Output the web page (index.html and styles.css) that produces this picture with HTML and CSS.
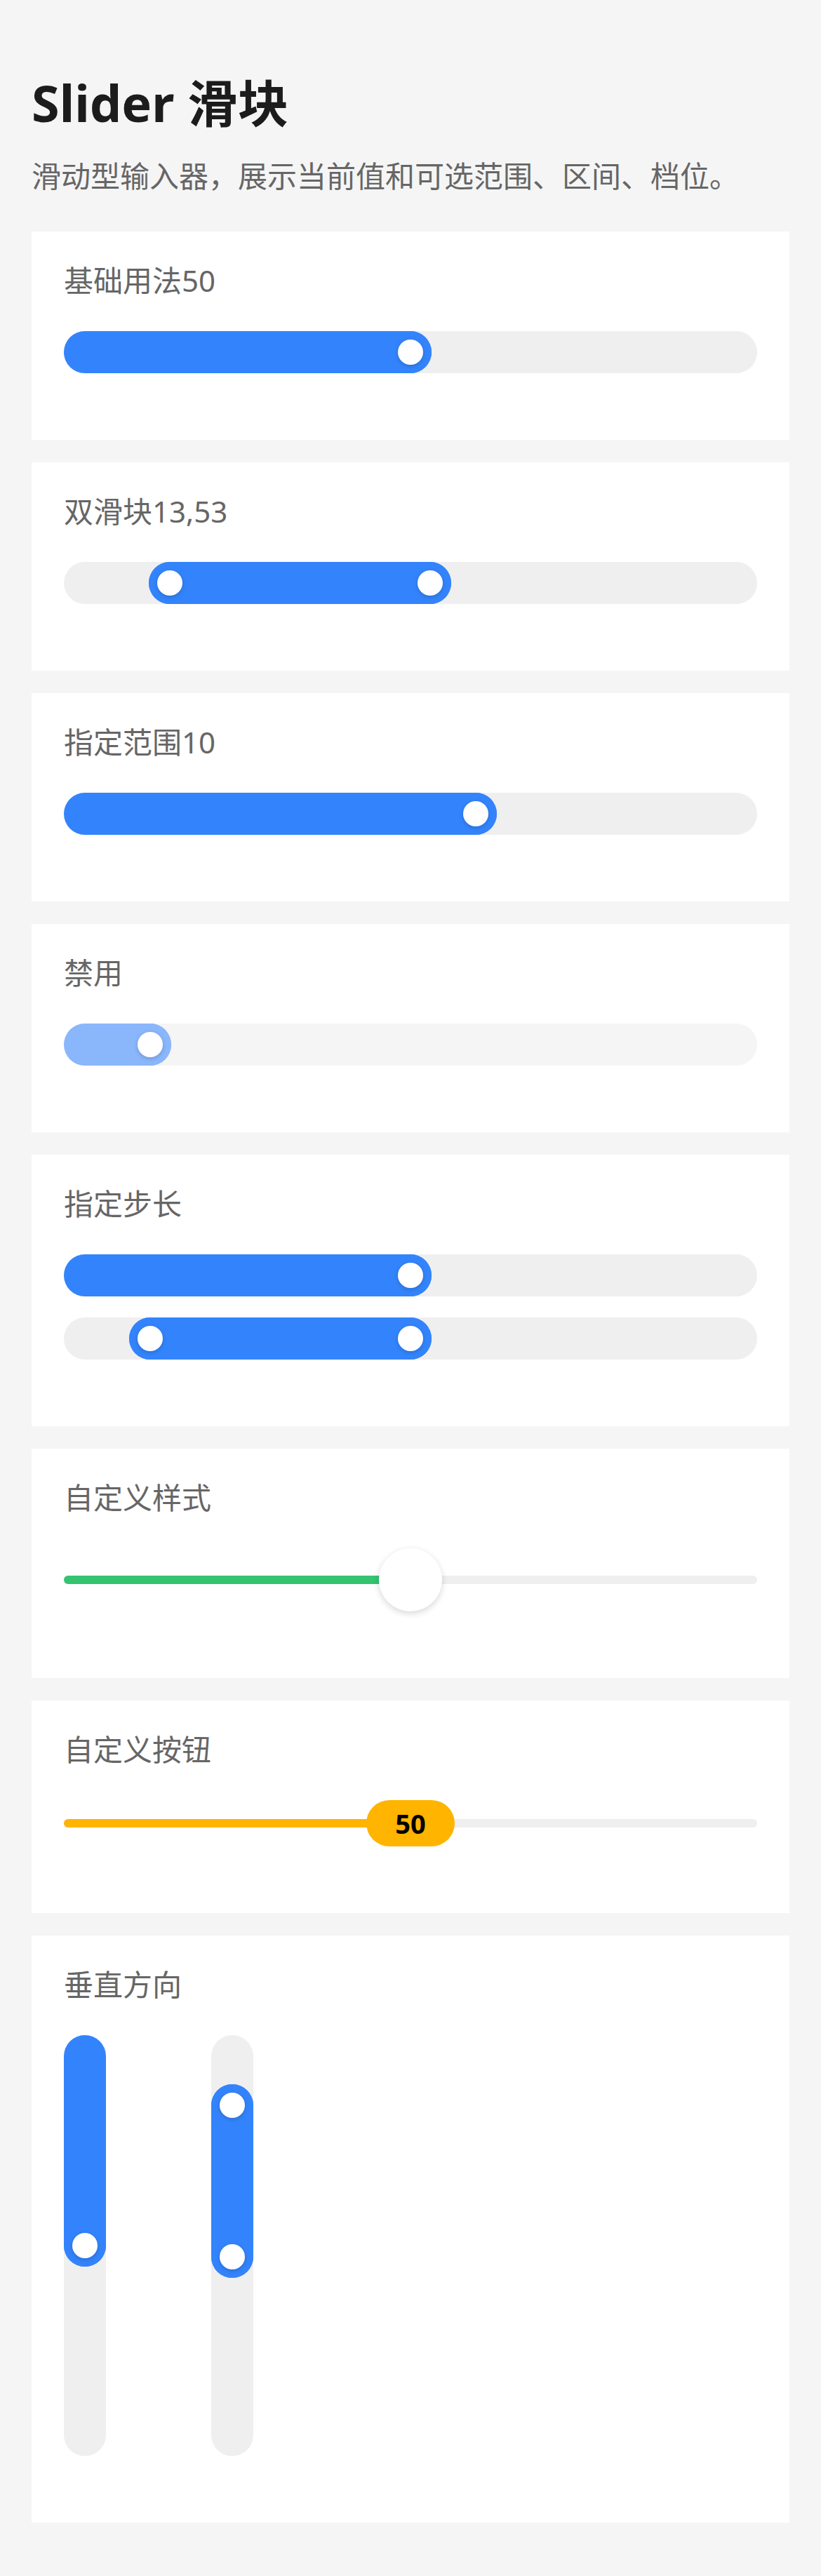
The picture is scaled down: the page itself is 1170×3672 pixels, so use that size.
FILE: index.html
```html
<!DOCTYPE html>
<html lang="zh-CN">
  <head>
    <meta charset="UTF-8" />
    <title>Slider 滑块</title>
    <link rel="stylesheet" href="styles.css">
  </head>
  <body>
    <div class="page">
      <h1 class="title">Slider 滑块</h1>
      <p class="desc">滑动型输入器，展示当前值和可选范围、区间、档位。</p>

      <div class="card">
        <div class="card-title">基础用法50</div>
        <div class="card-body">
          <div class="slider">
            <div class="slider-rail">
              <div class="slider-bar" style="left:0%;width:50%"></div>
              <div class="slider-btn" style="left:50%"></div>
            </div>
          </div>
        </div>
      </div>

      <div class="card">
        <div class="card-title">双滑块13,53</div>
        <div class="card-body">
          <div class="slider">
            <div class="slider-rail">
              <div class="slider-bar" style="left:13%;width:40%"></div>
              <div class="slider-btn" style="left:13%"></div>
              <div class="slider-btn" style="left:53%"></div>
            </div>
          </div>
        </div>
      </div>

      <div class="card">
        <div class="card-title">指定范围10</div>
        <div class="card-body">
          <div class="slider">
            <div class="slider-rail">
              <div class="slider-bar" style="left:0%;width:60%"></div>
              <div class="slider-btn" style="left:60%"></div>
            </div>
          </div>
        </div>
      </div>

      <div class="card">
        <div class="card-title">禁用</div>
        <div class="card-body">
          <div class="slider slider--disabled">
            <div class="slider-rail">
              <div class="slider-bar" style="left:0%;width:10%"></div>
              <div class="slider-btn" style="left:10%"></div>
            </div>
          </div>
        </div>
      </div>

      <div class="card">
        <div class="card-title">指定步长</div>
        <div class="card-body">
          <div class="slider">
            <div class="slider-rail">
              <div class="slider-bar" style="left:0%;width:50%"></div>
              <div class="slider-btn" style="left:50%"></div>
            </div>
          </div>
          <div class="slider">
            <div class="slider-rail">
              <div class="slider-bar" style="left:10%;width:40%"></div>
              <div class="slider-btn" style="left:10%"></div>
              <div class="slider-btn" style="left:50%"></div>
            </div>
          </div>
        </div>
      </div>

      <div class="card">
        <div class="card-title">自定义样式</div>
        <div class="card-body">
          <div class="slider slider--line">
            <div class="slider-rail">
              <div class="slider-bar" style="left:0%;width:50%"></div>
              <div class="slider-btn" style="left:50%"></div>
            </div>
          </div>
        </div>
      </div>

      <div class="card">
        <div class="card-title">自定义按钮</div>
        <div class="card-body">
          <div class="slider slider--pill">
            <div class="slider-rail">
              <div class="slider-bar" style="left:0%;width:50%"></div>
              <div class="slider-btn" style="left:50%">50</div>
            </div>
          </div>
        </div>
      </div>

      <div class="card">
        <div class="card-title">垂直方向</div>
        <div class="card-body card-body--row">
          <div class="slider slider--vertical">
            <div class="slider-rail">
              <div class="slider-bar" style="top:0%;height:50%"></div>
              <div class="slider-btn" style="top:50%"></div>
            </div>
          </div>
          <div class="slider slider--vertical">
            <div class="slider-rail">
              <div class="slider-bar" style="top:13%;height:40%"></div>
              <div class="slider-btn" style="top:13%"></div>
              <div class="slider-btn" style="top:53%"></div>
            </div>
          </div>
        </div>
      </div>
    </div>
  </body>
</html>
```

FILE: styles.css
```css
body {
  margin: 0;
  background-color: #f5f5f5;
  font-family: "Noto Sans", "Noto Sans CJK SC", sans-serif;
}

.page {
  padding: 96px 45px 78px;
}

.title {
  margin: 0;
  font-size: 72px;
  line-height: 100px;
  font-weight: bold;
  color: #1c1c1c;
}

.desc {
  margin: 25px 0 49px;
  font-size: 42px;
  line-height: 60px;
  color: #666;
}

.card {
  padding: 45px 46px;
  margin-bottom: 32px;
  background-color: #fff;
}

.card-title {
  font-size: 42px;
  line-height: 49px;
  color: #666;
}

.card-body {
  display: flex;
  flex-direction: column;
  gap: 30px;
  margin: 48px 0 50px;
}

.card-body--row {
  flex-direction: row;
  gap: 150px;
}

/* slider */

.slider {
  position: relative;
  height: 60px;
  border-radius: 30px;
  background-color: #efefef;
}

.slider-rail {
  position: absolute;
  top: 0;
  bottom: 0;
  left: 30px;
  right: 30px;
}

.slider-bar {
  position: absolute;
  top: 0;
  height: 100%;
  margin-left: -30px;
  padding-right: 60px;
  border-radius: 30px;
  background-color: #3384fc;
}

.slider-btn {
  position: absolute;
  top: 0;
  width: 60px;
  height: 60px;
  margin-left: -30px;
  border-radius: 50%;
  background-color: #3384fc;
  display: flex;
  align-items: center;
  justify-content: center;
}

.slider-btn::after {
  content: "";
  width: 36px;
  height: 36px;
  border-radius: 50%;
  background-color: #fff;
  box-shadow: 0 2px 6px rgba(0, 0, 0, 0.18);
}

.slider--disabled {
  background-color: #f5f5f5;
}

.slider--disabled .slider-bar,
.slider--disabled .slider-btn {
  background-color: #8ab6fc;
}

/* custom line style */

.slider--line,
.slider--pill {
  background: none;
}

.slider--line {
  height: 90px;
}

.slider--line::before,
.slider--pill::before {
  content: "";
  position: absolute;
  left: 0;
  right: 0;
  height: 12px;
  border-radius: 6px;
  background-color: #efefef;
}

.slider--line::before,
.slider--line .slider-bar {
  top: 39px;
}

.slider--line .slider-bar,
.slider--pill .slider-bar {
  height: 12px;
  border-radius: 6px;
}

.slider--line .slider-bar {
  background-color: #34c471;
}

.slider--line .slider-btn {
  width: 90px;
  height: 90px;
  margin-left: -45px;
  background-color: #fff;
  box-shadow: 0 3px 10px rgba(0, 0, 0, 0.16);
}

.slider--line .slider-btn::after,
.slider--pill .slider-btn::after {
  display: none;
}

/* custom button */

.slider--pill {
  height: 66px;
}

.slider--pill::before,
.slider--pill .slider-bar {
  top: 27px;
}

.slider--pill .slider-bar {
  background-color: #ffb400;
}

.slider--pill .slider-btn {
  width: 126px;
  height: 66px;
  margin-left: -63px;
  border-radius: 33px;
  background-color: #ffb400;
  font-size: 38px;
  font-weight: bold;
  color: #000;
}

/* vertical */

.slider--vertical {
  width: 60px;
  height: 600px;
}

.slider--vertical .slider-rail {
  top: 30px;
  bottom: 30px;
  left: 0;
  right: 0;
}

.slider--vertical .slider-bar {
  left: 0;
  width: 100%;
  height: auto;
  margin: -30px 0 0;
  padding: 0 0 60px;
}

.slider--vertical .slider-btn {
  left: 0;
  margin: -30px 0 0;
}
```
